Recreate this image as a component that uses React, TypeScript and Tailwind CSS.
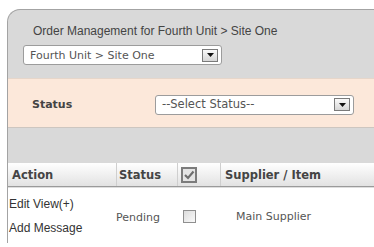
import React from "react";

const verdana = "font-['DejaVu_Sans',Verdana,sans-serif]";
const arial = "font-['Liberation_Sans',Arial,sans-serif]";

const DropButton = () => (
  <div className="flex h-[13px] w-[16px] items-center justify-center border border-[#7a7a7a] bg-gradient-to-b from-[#fafafa] to-[#d6d6d6]">
    <svg width="7" height="4" viewBox="0 0 7 4">
      <path d="M0 0 H7 L3.5 4 Z" fill="#111" />
    </svg>
  </div>
);

const Select = ({ label, width, size }: { label: string; width: string; size: string }) => (
  <div
    className={`flex h-[20px] items-center justify-between rounded-[3px] border border-[#9c9c9c] bg-white pl-[6px] pr-[3px] ${width}`}
  >
    <span className={`${verdana} ${size} leading-none text-[#555]`}>{label}</span>
    <DropButton />
  </div>
);

const App = () => {
  return (
    <div className="h-[247px] w-[374px] overflow-hidden bg-white">
      <div className="ml-[7px] mt-[9px] h-[234px] w-[420px] overflow-hidden rounded-tl-[13px] border-l border-t border-[#a3a3a3] bg-[#d9d9d9]">
        {/* heading + site picker */}
        <div className="h-[68px] pl-[15px] pt-[14px]">
          <p className={`${arial} pl-[10px] text-[12px] leading-[14px] text-[#444]`}>
            Order Management for Fourth Unit &gt; Site One
          </p>
          <div className="mt-[7px]">
            <Select label="Fourth Unit > Site One" width="w-[199px]" size="text-[11px]" />
          </div>
        </div>

        {/* status filter */}
        <div className="flex h-[49px] items-center border-t border-[#e6d6ca] bg-[#fce8da]">
          <span className={`${verdana} w-[147px] pl-[24px] pt-[5px] text-[11px] font-bold text-[#444]`}>Status</span>
          <div className="mt-[3px]">
            <Select label="--Select Status--" width="w-[199px]" size="text-[11.5px]" />
          </div>
        </div>

        <div className="h-[36px] border-t border-[#cdc6c0] bg-[#d9d9d9]" />

        {/* table header */}
        <div
          className={`${verdana} flex h-[24px] items-center border-b border-[#9a9a9a] bg-gradient-to-b from-white to-[#e2e2e2] text-[11.5px] font-bold text-[#444]`}
        >
          <div className="flex h-full w-[108px] items-center pl-[4px] pt-[2px]">Action</div>
          <div className="flex h-full w-[61px] items-center border-l border-[#cfcfcf] pl-[2px] pt-[2px]">Status</div>
          <div className="flex h-full w-[43px] items-center border-l border-[#cfcfcf] pl-[3px]">
            <svg width="16" height="16" viewBox="0 0 16 16">
              <rect x="1" y="1" width="14" height="14" fill="#e4e4e4" stroke="#7c7c7c" strokeWidth="2" />
              <path d="M4 8 L7 11 L12.5 4.5" fill="none" stroke="#6e6e6e" strokeWidth="2.2" />
            </svg>
          </div>
          <div className="flex h-full flex-1 items-center border-l border-[#cfcfcf] pl-[4px] pt-[2px]">
            Supplier / Item
          </div>
        </div>

        {/* row */}
        <div className="flex h-[56px] items-center border-t border-[#dedede] bg-white">
          <div className={`${arial} flex w-[108px] flex-col gap-[10px] pl-[1px] text-[12px] leading-[14px] text-[#333]`}>
            <span>Edit View(+)</span>
            <span>Add Message</span>
          </div>
          <div className={`${verdana} w-[61px] pt-[5px] text-[11px] text-[#555]`}>Pending</div>
          <div className="w-[43px] pl-[6px] pt-[1px]">
            <div className="h-[13px] w-[13px] border border-[#8f8f8f] bg-gradient-to-br from-[#dcdcdc] to-[#fafafa]" />
          </div>
          <div className={`${verdana} flex-1 pl-[16px] pt-[4px] text-[11px] text-[#555]`}>Main Supplier</div>
        </div>
      </div>
    </div>
  );
};

export default App;
